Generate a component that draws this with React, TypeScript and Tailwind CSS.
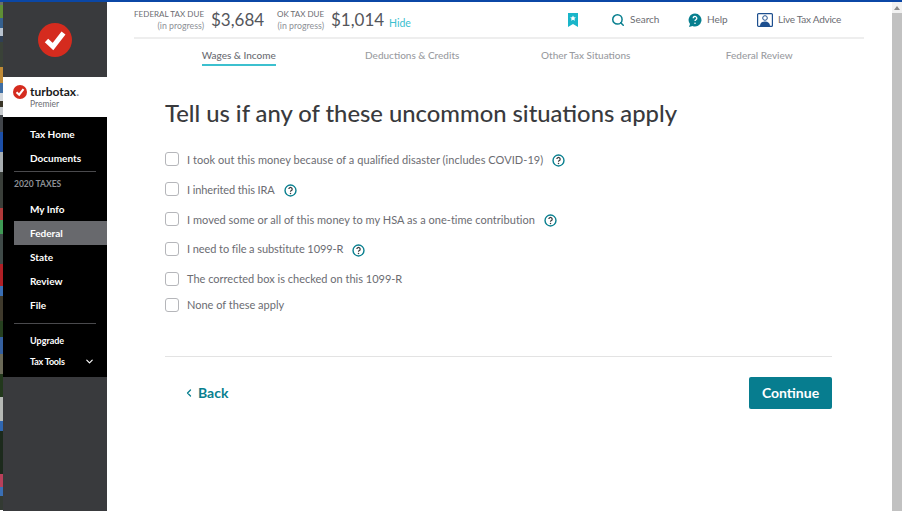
import { ChevronDown, ChevronLeft, Search } from "lucide-react";

const font = "font-['Lato','Noto_Sans',sans-serif]";

const steps = [
  { label: "Wages & Income", active: true },
  { label: "Deductions & Credits" },
  { label: "Other Tax Situations" },
  { label: "Federal Review" },
];

const options = [
  { label: "I took out this money because of a qualified disaster (includes COVID-19)", help: true, h: "h-[30px]", text: "mt-[2px] tracking-[0.05px]" },
  { label: "I inherited this IRA", help: true, h: "h-[30px]", text: "mt-[2px] tracking-[-0.1px]" },
  { label: "I moved some or all of this money to my HSA as a one-time contribution", help: true, h: "h-[30px]", text: "mt-[2px] tracking-[0.03px]" },
  { label: "I need to file a substitute 1099-R", help: true, h: "h-[30px]", text: "mt-[1px] tracking-[-0.08px]" },
  { label: "The corrected box is checked on this 1099-R", h: "h-[30px]", text: "tracking-[0px]" },
  { label: "None of these apply", h: "h-[22px]", text: "tracking-[0px]" },
];

// bit of desktop wallpaper showing left of the window
const strip = [
  ["h-[3px]", "bg-[#6b6f6a]"], ["h-[13px]", "bg-[#5f8f35]"], ["h-[10px]", "bg-[#35608f]"], ["h-[8px]", "bg-[#b9c3cf]"], ["h-[6px]", "bg-[#2f3f55]"],
  ["h-[25px]", "bg-[#3a4238]"], ["h-[16px]", "bg-[#c08a35]"], ["h-[10px]", "bg-[#3f6fa5]"], ["h-[8px]", "bg-[#d3d7db]"], ["h-[6px]", "bg-[#3a3528]"],
  ["h-[8px]", "bg-[#c9cdd0]"], ["h-[17px]", "bg-[#41454a]"], ["h-[20px]", "bg-[#1c4fa8]"], ["h-[20px]", "bg-[#a7adb0]"], ["h-[36px]", "bg-[#3a3f3a]"],
  ["h-[12px]", "bg-[#b03a3a]"], ["h-[14px]", "bg-[#3f9a55]"], ["h-[30px]", "bg-[#3f4a48]"], ["h-[22px]", "bg-[#b01f25]"], ["h-[10px]", "bg-[#3a6fb5]"],
  ["h-[25px]", "bg-[#3f3a2c]"], ["h-[16px]", "bg-[#26401f]"], ["h-[17px]", "bg-[#35609f]"], ["h-[20px]", "bg-[#6b6a58]"], ["h-[23px]", "bg-[#22381c]"],
  ["h-[24px]", "bg-[#b5b8b5]"], ["h-[10px]", "bg-[#2f66b0]"], ["h-[43px]", "bg-[#1c2a1c]"], ["h-[13px]", "bg-[#b8405a]"], ["h-[9px]", "bg-[#3a6fb5]"],
  ["h-[14px]", "bg-[#333a33]"],
];

function HelpCircle() {
  return (
    <svg width="13" height="13" viewBox="0 0 14 14" className="ml-[9px] mt-[2px] shrink-0">
      <circle cx="7" cy="7" r="5.9" fill="none" stroke="#087f8f" strokeWidth="1.5" />
      <path d="M5.2 5.5a1.8 1.8 0 1 1 2.7 1.6c-.6.4-.9.7-.9 1.3" fill="none" stroke="#393a3d" strokeWidth="1.3" />
      <circle cx="7" cy="10.2" r=".8" fill="#393a3d" />
    </svg>
  );
}

function Logo({ size }: { size: number }) {
  return (
    <svg width={size} height={size} viewBox="0 0 34 34">
      <circle cx="17" cy="17" r="17" fill="#d52b1e" />
      <path d="M8.500 17.500l6.500 6L25.500 10" fill="none" stroke="#fff" strokeWidth="5" />
    </svg>
  );
}

function SideLink({ label, active }: { label: string; active?: boolean }) {
  return (
    <div className={`h-6 flex items-center pl-[16px] ml-[11px] font-bold text-white text-[10px] ${active ? "bg-[#68696d]" : ""}`}>
      {label}
    </div>
  );
}

export default function App() {
  return (
    <div className={`w-[902px] h-[511px] overflow-hidden flex flex-col bg-white ${font}`}>
      <div className="h-[2px] bg-[#0b47a6] shrink-0" />
      <div className="flex flex-1 min-h-0">
        <div className="w-[3px] flex flex-col shrink-0 overflow-hidden">
          {strip.map(([h, bg], i) => (
            <div key={i} className={`${h} ${bg} shrink-0`} />
          ))}
        </div>

        {/* sidebar */}
        <aside className="w-[104px] shrink-0 bg-[#393a3d] flex flex-col">
          <div className="h-[75px] flex items-center justify-center">
            <Logo size={34} />
          </div>
          <div className="h-[40px] bg-white pl-[10px] pt-[8px]">
            <div className="flex items-center gap-[3px]">
              <Logo size={14} />
              <span className="text-[12px] leading-none font-bold text-[#1a1a1a]">
                turbotax<span className="text-[#8d9096]">.</span>
              </span>
            </div>
            <div className="text-[8.500px] leading-none text-[#6b6c72] ml-[17px] mt-[1px]">Premier</div>
          </div>
          <nav className="bg-black pt-[5px] h-[260px]">
            <SideLink label="Tax Home" />
            <SideLink label="Documents" />
            <div className="mx-[11px] mt-[1px] border-t border-[#4a4a4d]" />
            <div className="h-[25px] pl-[11px] flex items-center text-[8.500px] font-bold text-[#8d9096]">2020 TAXES</div>
            <SideLink label="My Info" />
            <SideLink label="Federal" active />
            <SideLink label="State" />
            <SideLink label="Review" />
            <SideLink label="File" />
            <div className="mx-[11px] mt-[6px] mb-[6px] border-t border-[#4a4a4d]" />
            <div className="h-[21px] flex items-center pl-[27px] text-[9px] font-bold text-white">Upgrade</div>
            <div className="h-[21px] flex items-center justify-between pl-[27px] pr-[12px] text-[9px] tracking-[-0.2px] font-bold text-white">
              Tax Tools
              <ChevronDown size={11} strokeWidth={2.5} />
            </div>
          </nav>
        </aside>

        {/* main */}
        <main className="flex-1 min-w-0 pl-[27px] pr-[28px]">
          <div className="h-[37px] flex items-center border-b-2 border-[#eeeeee] text-[#6b6c72] whitespace-nowrap">
            <div className="w-[70px] text-right leading-[12px] shrink-0">
              <div className="text-[8px] tracking-[0.05px]">FEDERAL TAX DUE</div>
              <div className="text-[8.800px] text-[#8d9096]">(in progress)</div>
            </div>
            <div className="w-[52px] ml-[7px] text-[17px] text-[#54565b]">$3,684</div>
            <div className="w-[48px] ml-[13px] text-right leading-[12px] shrink-0">
              <div className="text-[8px]">OK TAX DUE</div>
              <div className="text-[8.800px] text-[#8d9096]">(in progress)</div>
            </div>
            <div className="w-[52px] ml-[7px] text-[17px] text-[#54565b]">$1,014</div>
            <div className="w-[21px] ml-[6px] mt-[8px] text-[10.500px] text-[#3cc0cf]">Hide</div>

            <svg width="10" height="14" viewBox="0 0 10 14" className="ml-[158px] shrink-0">
              <path d="M0 0h10v14l-5-3-5 3z" fill="#19b5c9" />
              <path d="M5 2.500l.9 1.800 2 .2-1.500 1.300.5 2L5 6.800 3.100 7.800l.5-2L2.100 4.500l2-.2z" fill="#fff" />
            </svg>
            <Search size={14} strokeWidth={2.6} className="ml-[33px] text-[#087f8f] shrink-0" />
            <span className="ml-[5px] w-[29px] text-[10px]">Search</span>
            <svg width="14" height="14" viewBox="0 0 14 14" className="ml-[29px] shrink-0">
              <path d="M7 .5a6.500 6.500 0 1 1-2.500 12.500L1 14l1-3A6.500 6.500 0 0 1 7 .5z" fill="#087f8f" />
              <path d="M5.200 5.200a1.800 1.800 0 1 1 2.700 1.600c-.6.4-.9.7-.9 1.300" fill="none" stroke="#fff" strokeWidth="1.300" />
              <circle cx="7" cy="10.200" r=".8" fill="#fff" />
            </svg>
            <span className="ml-[5px] w-[20px] text-[10px]">Help</span>
            <svg width="16" height="14" viewBox="0 0 16 14" className="ml-[30px] shrink-0">
              <rect x=".6" y=".6" width="14.800" height="12.800" rx="1" fill="#fff" stroke="#1d4f8f" strokeWidth="1.200" />
              <circle cx="8" cy="5" r="2.300" fill="none" stroke="#1d4f8f" />
              <path d="M3 13c0-3 2-4.500 5-4.500s5 1.500 5 4.500z" fill="#1d4f8f" />
            </svg>
            <span className="ml-[5px] text-[10px] tracking-[-0.25px]">Live Tax Advice</span>
          </div>

          <div className="flex h-[27px] px-[18px] text-[10px] font-medium text-[#9a9ca1]">
            {steps.map((s, i) => (
              <div key={i} className="flex-1 flex justify-center">
                <div className={`h-[27px] pt-[9px] leading-[14px] ${s.active ? "text-[#6b6c72] border-b-2 border-[#3cc0cf]" : ""}`}>{s.label}</div>
              </div>
            ))}
          </div>

          <div className="w-[667px] ml-[31px]">
            <h1 className="mt-[33px] text-[23.800px] leading-[28px] font-medium text-[#393a3d] whitespace-nowrap">
              Tell us if any of these uncommon situations apply
            </h1>
            <div className="mt-[17px] flex flex-col">
              {options.map((o, i) => (
                <label key={i} className={`${o.h} flex items-center text-[11px] text-[#6b6c72]`}>
                  <span className="w-[14px] h-[14px] border-[1.500px] border-[#b5b6ba] rounded-[3px] mr-[8px] shrink-0" />
                  <span className={`whitespace-nowrap ${o.text}`}>{o.label}</span>
                  {o.help && <HelpCircle />}
                </label>
              ))}
            </div>
            <div className="mt-[40px] border-t border-[#e3e3e3]" />
            <div className="mt-[20px] flex items-center justify-between">
              <div className="flex items-center pl-[18px] pb-[2px] text-[#087f8f] text-[14px] font-bold">
                <ChevronLeft size={12} strokeWidth={2.5} className="mr-[3px] mt-[2px]" />
                Back
              </div>
              <button className="w-[83px] h-[32px] pb-[2px] rounded-[2px] bg-[#077d8f] text-white text-[14px] font-bold">Continue</button>
            </div>
          </div>
        </main>

        {/* scrollbar */}
        <div className="w-[10px] shrink-0 bg-[#f1f1f1] flex flex-col">
          <div className="h-[11px] flex items-center justify-center">
            <svg width="6" height="4" viewBox="0 0 6 4">
              <path d="M3 0l3 4H0z" fill="#8a8a8a" />
            </svg>
          </div>
          <div className="flex-1 bg-[#c1c1c1]" />
        </div>
      </div>
    </div>
  );
}
